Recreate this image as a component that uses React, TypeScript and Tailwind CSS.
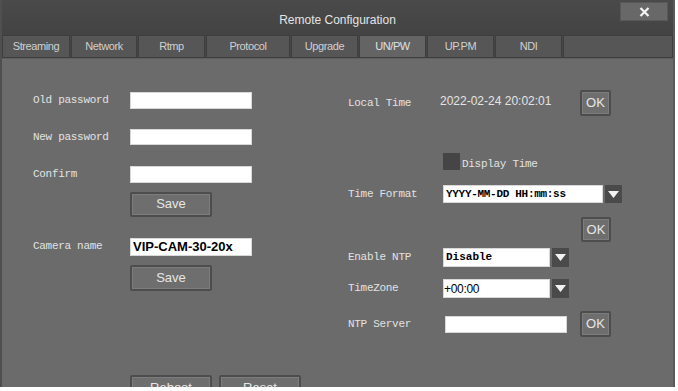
import React from 'react';

const tabs = [
  { name: 'Streaming', w: 'w-[68px]' },
  { name: 'Network', w: 'w-[66px]' },
  { name: 'Rtmp', w: 'w-[67px]' },
  { name: 'Protocol', w: 'w-[84px]' },
  { name: 'Upgrade', w: 'w-[67px]' },
  { name: 'UN/PW', w: 'w-[67px]', active: true },
  { name: 'UP.PM', w: 'w-[67px]' },
  { name: 'NDI', w: 'w-[67px]' },
];

const mono = { fontFamily: '"Liberation Mono", "DejaVu Sans Mono", monospace' };
const sans = { fontFamily: '"Liberation Sans", Arial, sans-serif' };

function Label({ children, w }: { children: React.ReactNode; w: string }) {
  return (
    <span className={`${w} shrink-0 text-[11px] text-[#e2e2e2] tracking-[-0.3px]`} style={mono}>
      {children}
    </span>
  );
}

function Btn({ children, className }: { children: React.ReactNode; className: string }) {
  return (
    <button
      className={`${className} flex items-center justify-center rounded-[2px] border-2 border-[#4d4d4d] bg-[#6e6e6e] text-[13px] text-[#e6e6e6] shadow-[inset_0_0_0_1px_#7c7c7c]`}
      style={sans}
    >
      {children}
    </button>
  );
}

function Arrow() {
  return (
    <div className="flex w-[17px] h-full shrink-0 items-center justify-center bg-[#4a4a4a]">
      <svg width="11" height="7" viewBox="0 0 11 7">
        <path d="M0 0 H11 L5.5 7 Z" fill="#f2f2f2" />
      </svg>
    </div>
  );
}

export default function App() {
  return (
    <div className="w-[678px] h-[391px] bg-white">
      <div className="flex flex-col w-[675px] h-[387px] border-l-2 border-[#4f4f4f] border-r-2 border-r-[#5a5a5a] bg-[#6b6b6b]">
        {/* title bar */}
        <div className="relative h-[35px] shrink-0 bg-gradient-to-b from-[#4a4a4a] to-[#434343] flex items-center justify-center">
          <span className="text-[12px] text-[#e4e4e4] pt-[5px]" style={sans}>
            Remote Configuration
          </span>
          <div className="absolute right-[5px] top-[2px] w-[48px] h-[19px] bg-[#686868] border border-[#585858] flex items-center justify-center">
            <svg width="11" height="10" viewBox="0 0 11 10">
              <path d="M1.5 1 L9.5 9 M9.5 1 L1.5 9" stroke="#f4f4f4" strokeWidth="2.2" />
            </svg>
          </div>
        </div>

        {/* tabs */}
        <div className="flex h-[24px] shrink-0 gap-[1px] bg-[#474747] border-b border-[#5f5f5f]" style={sans}>
          {tabs.map((t) => (
            <div
              key={t.name}
              className={`${t.w} flex items-center justify-center border border-[#3e3e3e] text-[11px] tracking-[-0.4px] ${
                t.active ? 'bg-[#646464] text-[#e0e0e0]' : 'bg-[#565656] text-[#d0d0d0]'
              }`}
            >
              {t.name}
            </div>
          ))}
          <div className="flex-1 border border-[#3e3e3e] bg-[#565656]" />
        </div>

        {/* content */}
        <div className="flex flex-1 overflow-hidden">
          {/* left column */}
          <div className="flex flex-col w-[315px] pl-[31px] shrink-0">
            <div className="flex items-center mt-[33px] h-[17px]">
              <Label w="w-[97px]">Old password</Label>
              <div className="w-[122px] h-full bg-white border border-[#d8d8d8]" />
            </div>
            <div className="flex items-center mt-[20px] h-[17px]">
              <Label w="w-[97px]">New password</Label>
              <div className="w-[122px] h-full bg-white border border-[#d8d8d8]" />
            </div>
            <div className="flex items-center mt-[21px] h-[17px]">
              <Label w="w-[97px]">Confirm</Label>
              <div className="w-[122px] h-full bg-white border border-[#d8d8d8]" />
            </div>
            <Btn className="ml-[97px] mt-[9px] w-[82px] h-[25px] shrink-0">Save</Btn>
            <div className="flex items-center mt-[21px] h-[18px]">
              <Label w="w-[97px]">Camera name</Label>
              <div
                className="w-[122px] h-full bg-white border border-[#d8d8d8] flex items-center pl-[2px] text-[13px] font-bold text-black"
                style={sans}
              >
                VIP-CAM-30-20x
              </div>
            </div>
            <Btn className="ml-[97px] mt-[9px] w-[82px] h-[26px] shrink-0">Save</Btn>
            <div className="flex gap-[7px] ml-[97px] mt-[84px]">
              <Btn className="w-[82px] h-[26px] shrink-0">Reboot</Btn>
              <Btn className="w-[82px] h-[26px] shrink-0">Reset</Btn>
            </div>
          </div>

          {/* right column */}
          <div className="flex flex-col pl-[31px]">
            <div className="flex items-center mt-[31px] h-[26px]">
              <Label w="w-[92px]">Local Time</Label>
              <span className="w-[140px] shrink-0 text-[12px] text-[#e4e4e4] -mt-[4px]" style={sans}>
                2022-02-24 20:02:01
              </span>
              <Btn className="w-[31px] h-[26px]">OK</Btn>
            </div>
            <div className="flex items-center mt-[37px] h-[17px] ml-[95px]">
              <div className="w-[17px] h-[17px] bg-[#454545]" />
              <span className="ml-[2px] mt-[6px] text-[11px] text-[#e2e2e2] tracking-[-0.3px]" style={mono}>
                Display Time
              </span>
            </div>
            <div className="flex items-center mt-[15px] h-[18px]">
              <Label w="w-[95px]">Time Format</Label>
              <div
                className="w-[160px] h-full bg-white border border-[#d8d8d8] flex items-center pl-[2px] text-[11px] font-bold text-black tracking-[-0.3px]"
                style={mono}
              >
                YYYY-MM-DD HH:mm:ss
              </div>
              <div className="ml-[2px] h-full">
                <Arrow />
              </div>
            </div>
            <Btn className="ml-[233px] mt-[14px] w-[30px] h-[25px] shrink-0">OK</Btn>
            <div className="flex items-center mt-[6px] h-[19px]">
              <Label w="w-[95px]">Enable NTP</Label>
              <div
                className="w-[107px] h-full bg-white border border-[#d8d8d8] flex items-center pl-[2px] text-[11px] font-bold text-black"
                style={mono}
              >
                Disable
              </div>
              <div className="ml-[2px] h-full">
                <Arrow />
              </div>
            </div>
            <div className="flex items-center mt-[12px] h-[19px]">
              <Label w="w-[95px]">TimeZone</Label>
              <div
                className="w-[107px] h-full bg-white border border-[#d8d8d8] flex items-center text-[12px] text-black tracking-[-0.3px]"
                style={sans}
              >
                +00:00
              </div>
              <div className="ml-[2px] h-full">
                <Arrow />
              </div>
            </div>
            <div className="flex items-center mt-[13px] h-[26px]">
              <Label w="w-[97px]">NTP Server</Label>
              <div className="w-[122px] h-[17px] bg-white border border-[#d8d8d8]" />
              <Btn className="ml-[13px] w-[31px] h-[26px]">OK</Btn>
            </div>
          </div>
        </div>
      </div>
    </div>
  );
}
